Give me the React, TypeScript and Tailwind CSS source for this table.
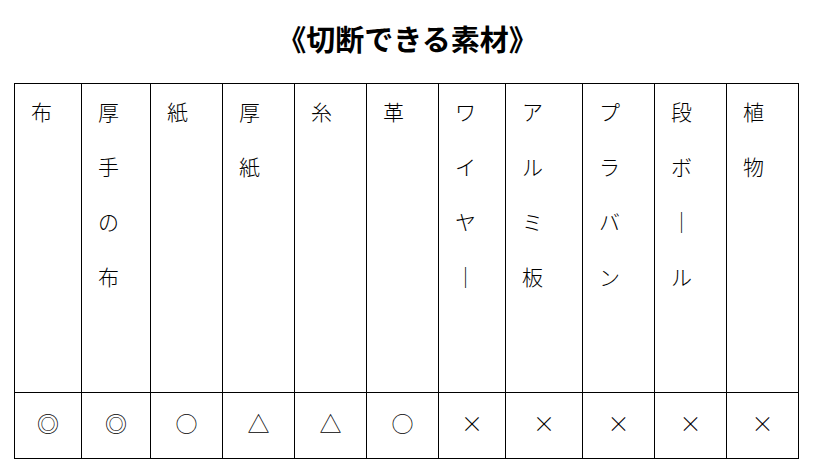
import React from "react";

const cols: { w: string; label: string[]; mark: string }[] = [
  { w: "w-[67px]", label: ["布"], mark: "◎" },
  { w: "w-[69px]", label: ["厚", "手", "の", "布"], mark: "◎" },
  { w: "w-[72px]", label: ["紙"], mark: "○" },
  { w: "w-[72px]", label: ["厚", "紙"], mark: "△" },
  { w: "w-[72px]", label: ["糸"], mark: "△" },
  { w: "w-[72px]", label: ["革"], mark: "○" },
  { w: "w-[67px]", label: ["ワ", "イ", "ヤ", "｜"], mark: "×" },
  { w: "w-[77px]", label: ["ア", "ル", "ミ", "板"], mark: "×" },
  { w: "w-[72px]", label: ["プ", "ラ", "バ", "ン"], mark: "×" },
  { w: "w-[72px]", label: ["段", "ボ", "｜", "ル"], mark: "×" },
  { w: "w-[73px]", label: ["植", "物"], mark: "×" },
];

export default function App() {
  return (
    <div
      className="w-[815px] h-[472px] bg-white text-black"
      style={{ fontFamily: '"Noto Sans CJK JP", "Noto Sans", sans-serif' }}
    >
      <div className="h-[83px] pt-[22px] text-center text-[29px] leading-[32px] font-bold">
        《切断できる素材》
      </div>
      <div className="ml-[14px] flex border-t border-black w-fit">
        {cols.map((c, i) => (
          <div
            key={i}
            className={`${c.w} flex flex-col border-l border-black ${
              i === cols.length - 1 ? "border-r" : ""
            }`}
          >
            <div className="h-[309px] border-b border-black pl-[16px] flex flex-col text-[21px] leading-[55px] font-light">
              {c.label.map((ch, j) => (
                <span key={j}>{ch}</span>
              ))}
            </div>
            <div className="h-[66px] border-b border-black flex items-center justify-center pb-[6px] text-[22px] font-light">
              {c.mark}
            </div>
          </div>
        ))}
      </div>
    </div>
  );
}
